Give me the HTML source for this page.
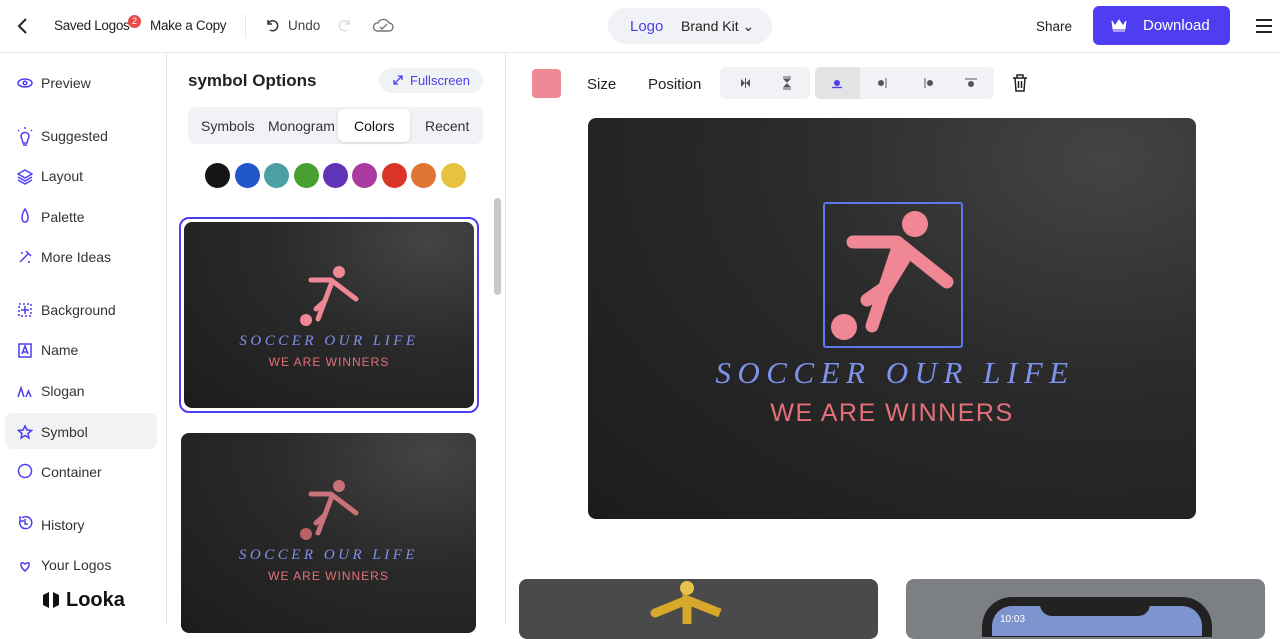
<!DOCTYPE html>
<html><head><meta charset="utf-8"><style>
*{box-sizing:border-box;margin:0;padding:0}
body{width:1280px;height:624px;overflow:hidden;background:#fff;font-family:"Liberation Sans",sans-serif;color:#222;position:relative}
.a{position:absolute}
.top{left:0;top:0;width:1280px;height:53px;border-bottom:1px solid #e8e8ec}
.t{font-size:13.5px;color:#222}
.nav{font-size:14px;color:#333}
.sw{width:25px;height:25px;border-radius:50%;top:163px}
.card{border-radius:8px;background:radial-gradient(ellipse at 85% 10%,#444 0%,#2a2a2a 45%,#1c1c1c 100%)}
</style></head><body>
<div class="a top"></div>
<svg class="a" style="left:16px;top:17px" width="14" height="18"><path d="M10 2 L3 9 L10 16" stroke="#222" stroke-width="2" fill="none"/></svg>
<div class="a t" style="left:54px;top:18px;letter-spacing:-0.3px">Saved Logos</div>
<div class="a" style="left:128px;top:15px;width:13px;height:13px;border-radius:50%;background:#e94b4b;color:#fff;font-size:9px;text-align:center;line-height:13px">2</div>
<div class="a t" style="left:150px;top:18px;letter-spacing:-0.3px">Make a Copy</div>
<div class="a" style="left:245px;top:14px;width:1px;height:24px;background:#e3e6ef"></div>
<svg class="a" style="left:265px;top:18px" width="14" height="14"><path d="M3 2 V6 H7 M3 6 A5 5 0 1 1 5 12" stroke="#333" stroke-width="1.5" fill="none"/></svg>
<div class="a t" style="left:288px;top:18px;color:#444">Undo</div>
<svg class="a" style="left:338px;top:18px" width="14" height="14"><path d="M11 2 V6 H7 M11 6 A5 5 0 1 0 9 12" stroke="#d8dce6" stroke-width="1.5" fill="none"/></svg>
<svg class="a" style="left:372px;top:17px" width="22" height="16"><path d="M5 14 H17 A4 4 0 0 0 17 6 A6 6 0 0 0 6 6 A4 4 0 0 0 5 14Z M8 10 L10 12 L15 7" stroke="#777" stroke-width="1.4" fill="none"/></svg>
<div class="a" style="left:608px;top:8px;width:164px;height:36px;border-radius:18px;background:#f1f2f5"></div>
<div class="a" style="left:630px;top:18px;font-size:15px;color:#4a3ff0">Logo</div>
<div class="a" style="left:681px;top:18px;font-size:14px;color:#222">Brand Kit ⌄</div>
<div class="a t" style="left:1036px;top:19px">Share</div>
<div class="a" style="left:1093px;top:6px;width:137px;height:39px;border-radius:6px;background:#4f3df2;color:#fff;font-size:15px;line-height:39px;padding-left:50px">Download</div>
<svg class="a" style="left:1111px;top:18px" width="16" height="14"><path d="M1 3 L4 8 L8 2 L12 8 L15 3 L14 11 H2Z M2 13 H14" fill="#fff" stroke="#fff" stroke-width="1"/></svg>
<svg class="a" style="left:1255px;top:18px" width="18" height="16"><path d="M1 2H17M1 8H17M1 14H17" stroke="#222" stroke-width="2"/></svg>

<div class="a" style="left:166px;top:53px;width:1px;height:571px;background:#e3e6ef"></div>
<div class="a" style="left:5px;top:413px;width:152px;height:36px;border-radius:8px;background:#f2f2f4"></div>
<div class="a nav" style="left:41px;top:75px">Preview</div>
<div class="a nav" style="left:41px;top:128px">Suggested</div>
<div class="a nav" style="left:41px;top:168px">Layout</div>
<div class="a nav" style="left:41px;top:209px">Palette</div>
<div class="a nav" style="left:41px;top:249px">More Ideas</div>
<div class="a nav" style="left:41px;top:302px">Background</div>
<div class="a nav" style="left:41px;top:342px">Name</div>
<div class="a nav" style="left:41px;top:383px">Slogan</div>
<div class="a nav" style="left:41px;top:424px">Symbol</div>
<div class="a nav" style="left:41px;top:464px">Container</div>
<div class="a nav" style="left:41px;top:517px">History</div>
<div class="a nav" style="left:41px;top:557px">Your Logos</div>
<svg class="a" style="left:17px;top:75px" width="16" height="500" fill="none" stroke="#4f3df2" stroke-width="1.5">
<ellipse cx="8" cy="8" rx="7" ry="4"/><circle cx="8" cy="8" r="1.8"/>
<path d="M5 64 A4 4 0 1 1 11 64 L10 68 H6Z M6 70H10 M8 54V52 M2 56L1 55 M14 56L15 55"/>
<path d="M8 95 L15 99 L8 103 L1 99Z M1 102 L8 106 L15 102 M1 105 L8 109 L15 105"/>
<path d="M8 134 C4 140 4 147 8 147 C12 147 12 140 8 134Z"/>
<path d="M3 187 L12 178 M9 176 L14 181 M5 177V179 M12 186V188"/>
<path d="M2 229h12v12h-12z" stroke-dasharray="2 2"/><path d="M8 231V239M4 235H12"/>
<rect x="2" y="269" width="12" height="13"/><path d="M5 279 L8 271 L11 279 M6 277H10"/>
<path d="M1 322 L4 313 L7 322 M9 322 L11.5 316 L14 322"/>
<path d="M8 351 L10 355 L14.5 355.5 L11 358.5 L12 363 L8 360.5 L4 363 L5 358.5 L1.5 355.5 L6 355Z"/>
<circle cx="8" cy="396" r="6.5"/>
<path d="M3 446 A6 6 0 1 0 5 443 M3 441V446H7 M8 444V449H11"/>
<path d="M8 496 C2 491 3 485 8 489 C13 485 14 491 8 496Z"/>
</svg>
<svg class="a" style="left:41px;top:591px" width="20" height="18"><path d="M2 4 L8 1 V17 L2 14Z M12 1 L18 4 V14 L12 17Z" fill="#111"/></svg>
<div class="a" style="left:66px;top:589px;font-size:20px;font-weight:bold;color:#111">Looka</div>

<div class="a" style="left:505px;top:53px;width:1px;height:571px;background:#e3e6ef"></div>
<div class="a" style="left:188px;top:71px;font-size:17px;font-weight:bold;color:#222">symbol Options</div>
<div class="a" style="left:379px;top:68px;width:104px;height:25px;border-radius:13px;background:#f1f2f5;color:#4a3ff0;font-size:13px;line-height:25px;padding-left:31px">Fullscreen</div>
<svg class="a" style="left:392px;top:74px" width="12" height="12"><path d="M2 10 L10 2 M6 2H10V6 M2 6V10H6" stroke="#4a3ff0" stroke-width="1.3" fill="none"/></svg>
<div class="a" style="left:188px;top:107px;width:295px;height:37px;border-radius:8px;background:#f1f2f5"></div>
<div class="a" style="left:338px;top:109px;width:72px;height:33px;border-radius:6px;background:#fff;box-shadow:0 1px 3px rgba(0,0,0,.12)"></div>
<div class="a nav" style="left:201px;top:118px">Symbols</div>
<div class="a nav" style="left:268px;top:118px">Monogram</div>
<div class="a nav" style="left:354px;top:118px;color:#111">Colors</div>
<div class="a nav" style="left:425px;top:118px">Recent</div>
<div class="a sw" style="left:205px;background:#151515"></div>
<div class="a sw" style="left:235px;background:#2157c8"></div>
<div class="a sw" style="left:264px;background:#4aa0a4"></div>
<div class="a sw" style="left:294px;background:#47a02f"></div>
<div class="a sw" style="left:323px;background:#6033b8"></div>
<div class="a sw" style="left:352px;background:#a93ba0"></div>
<div class="a sw" style="left:382px;background:#d93426"></div>
<div class="a sw" style="left:411px;background:#e07533"></div>
<div class="a sw" style="left:441px;background:#e6c23f"></div>
<div class="a" style="left:494px;top:198px;width:7px;height:97px;border-radius:4px;background:#c8c8cc"></div>

<div class="a" style="left:179px;top:217px;width:300px;height:196px;border-radius:10px;border:2px solid #4f3df2"></div>
<div class="a card" style="left:184px;top:222px;width:290px;height:186px"></div>
<svg class="a" style="left:296px;top:262px" width="66" height="66"><g stroke="#ef8795" stroke-width="5" stroke-linecap="round" stroke-linejoin="round" fill="none"><path d="M15 18H35L60 37M36 20L22 57M29 39L20 47"/></g><circle cx="43" cy="10" r="6" fill="#ef8795"/><circle cx="10" cy="58" r="6" fill="#ef8795"/></svg>
<div class="a" style="left:184px;top:333px;width:290px;text-align:center;font-family:'Liberation Serif',serif;font-style:italic;font-size:15px;letter-spacing:3.5px;color:#8090ee">SOCCER OUR LIFE</div>
<div class="a" style="left:184px;top:355px;width:290px;text-align:center;font-size:12px;letter-spacing:1px;color:#e5707a">WE ARE WINNERS</div>

<div class="a card" style="left:181px;top:433px;width:295px;height:200px"></div>
<svg class="a" style="left:296px;top:476px" width="66" height="66"><g stroke="#c97279" stroke-width="5" stroke-linecap="round" stroke-linejoin="round" fill="none"><path d="M15 18H35L60 37M36 20L22 57M29 39L20 47"/></g><circle cx="43" cy="10" r="6" fill="#c97279"/><circle cx="10" cy="58" r="6" fill="#b86068"/></svg>
<div class="a" style="left:181px;top:547px;width:295px;text-align:center;font-family:'Liberation Serif',serif;font-style:italic;font-size:15px;letter-spacing:3.5px;color:#8090ee">SOCCER OUR LIFE</div>
<div class="a" style="left:181px;top:569px;width:295px;text-align:center;font-size:12px;letter-spacing:1px;color:#e5707a">WE ARE WINNERS</div>

<div class="a" style="left:532px;top:69px;width:29px;height:29px;border-radius:4px;background:#ee8a96"></div>
<div class="a" style="left:587px;top:76px;font-size:15px;color:#222">Size</div>
<div class="a" style="left:648px;top:76px;font-size:15px;color:#222">Position</div>
<div class="a" style="left:720px;top:67px;width:90px;height:32px;border-radius:5px;background:#f1f2f5"></div>
<div class="a" style="left:815px;top:67px;width:179px;height:32px;border-radius:5px;background:#f1f2f5"></div>
<div class="a" style="left:815px;top:67px;width:45px;height:32px;border-radius:5px 0 0 5px;background:#e3e3e6"></div>
<svg class="a" style="left:720px;top:67px" width="280" height="32">
<path d="M21 12 L25 16 L21 20Z M30 12 L26 16 L30 20Z" fill="#555"/><path d="M25.5 11V21" stroke="#555"/>
<path d="M63 10H71 M63 22H71 M64 12L67 15L70 12Z M64 20L67 17L70 20Z" stroke="#555" fill="#555"/>
<circle cx="117" cy="16" r="3" fill="#4f3df2"/><path d="M112 20.5H122" stroke="#4f3df2" stroke-width="1.3"/>
<circle cx="161" cy="16" r="3" fill="#555"/><path d="M166 11V21" stroke="#555"/>
<circle cx="210" cy="16" r="3" fill="#555"/><path d="M205 11V21" stroke="#555"/>
<circle cx="251" cy="17" r="3" fill="#555"/><path d="M245 12H257" stroke="#555"/>
</svg>
<svg class="a" style="left:1012px;top:74px" width="16" height="18" fill="none" stroke="#222" stroke-width="1.5"><path d="M1 4H15 M5 4V1H11V4 M3 4 L4 17H12 L13 4 M6.5 7V14 M9.5 7V14"/></svg>

<div class="a card" style="left:588px;top:118px;width:608px;height:401px"></div>
<div class="a" style="left:823px;top:202px;width:140px;height:146px;border:2px solid #5d78f0;border-radius:3px"></div>
<svg class="a" style="left:823px;top:202px" width="140" height="146"><g stroke="#ef8795" stroke-width="13" stroke-linecap="round" stroke-linejoin="round" fill="none"><path d="M30 40H74 L124 80 M76 42 L49 124 M84 52 L62 88 M64 84 L44 98"/></g><circle cx="92" cy="22" r="13" fill="#ef8795"/><circle cx="21" cy="125" r="13" fill="#ef8795"/></svg>
<div class="a" style="left:588px;top:355px;width:608px;text-align:center;font-family:'Liberation Serif',serif;font-style:italic;font-size:31px;letter-spacing:6.5px;color:#7e92ee;padding-left:6px">SOCCER OUR LIFE</div>
<div class="a" style="left:588px;top:399px;width:608px;text-align:center;font-size:25px;letter-spacing:1.5px;color:#e5707a">WE ARE WINNERS</div>

<div class="a" style="left:519px;top:579px;width:359px;height:60px;border-radius:8px;background:#4a4a4a"></div>
<svg class="a" style="left:650px;top:580px" width="100" height="44"><circle cx="37" cy="8" r="7" fill="#e6c24a"/><path d="M5 33 L37 20 L70 33 L37 20 V44" stroke="#d8a82c" stroke-width="9" stroke-linecap="round" fill="none"/></svg>
<div class="a" style="left:906px;top:579px;width:359px;height:60px;border-radius:8px;background:#7c7f83"></div>
<div class="a" style="left:982px;top:597px;width:230px;height:40px;border-radius:30px 30px 0 0;background:#222"></div>
<div class="a" style="left:992px;top:606px;width:210px;height:30px;border-radius:20px 20px 0 0;background:#7d94cf"></div>
<div class="a" style="left:1040px;top:600px;width:110px;height:16px;border-radius:0 0 12px 12px;background:#222"></div>
<div class="a" style="left:1000px;top:614px;font-size:10px;color:#fff">10:03</div>
</body></html>
